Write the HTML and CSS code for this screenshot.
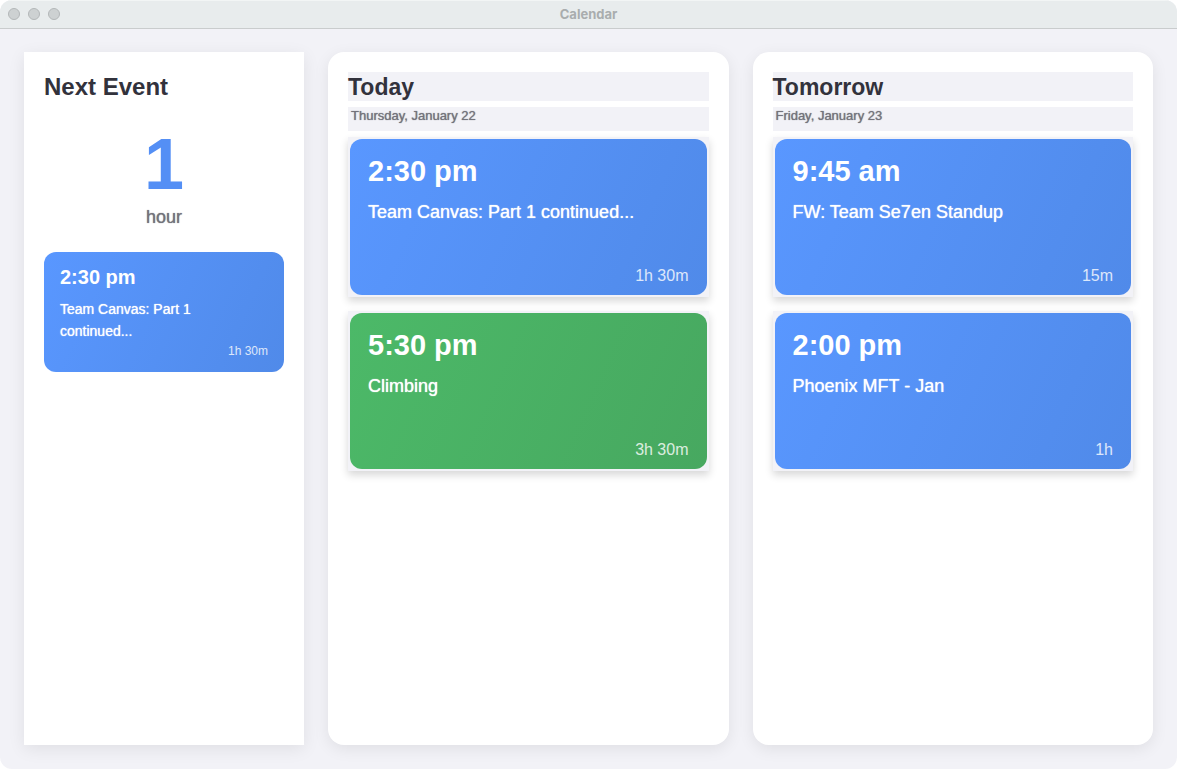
FILE: index.html
```html
<!DOCTYPE html>
<html lang="en">
<head>
  <meta charset="UTF-8">
  <meta name="viewport" content="width=device-width, initial-scale=1.0">
  <title>Calendar</title>
  <link rel="stylesheet" href="styles.css">
</head>
<body>

  <div class="window">
    <header class="titlebar">
      <div class="window-buttons">
        <button type="button" class="window-button" aria-label="Close"></button>
        <button type="button" class="window-button" aria-label="Minimize"></button>
        <button type="button" class="window-button" aria-label="Zoom"></button>
      </div>
      <div class="window-title">Calendar</div>
    </header>

    <main class="board">
      <aside class="next-event">
        <h2 class="next-title">Next Event</h2>
        <div class="countdown">
          <div class="countdown-number">1</div>
          <div class="countdown-unit">hour</div>
        </div>
        <div class="mini-card blue">
          <div class="mini-time">2:30 pm</div>
          <div class="mini-name">Team Canvas: Part 1 continued...</div>
          <div class="mini-duration">1h 30m</div>
        </div>
      </aside>

      <section class="day">
        <h2 class="day-title">Today</h2>
        <div class="day-date">Thursday, January 22</div>
        <div class="event-list">
          <div class="event">
            <div class="event-card blue">
              <div class="event-time">2:30 pm</div>
              <div class="event-name">Team Canvas: Part 1 continued...</div>
              <div class="event-duration">1h 30m</div>
            </div>
          </div>
          <div class="event">
            <div class="event-card green">
              <div class="event-time">5:30 pm</div>
              <div class="event-name">Climbing</div>
              <div class="event-duration">3h 30m</div>
            </div>
          </div>
        </div>
      </section>

      <section class="day">
        <h2 class="day-title">Tomorrow</h2>
        <div class="day-date">Friday, January 23</div>
        <div class="event-list">
          <div class="event">
            <div class="event-card blue">
              <div class="event-time">9:45 am</div>
              <div class="event-name">FW: Team Se7en Standup</div>
              <div class="event-duration">15m</div>
            </div>
          </div>
          <div class="event">
            <div class="event-card blue">
              <div class="event-time">2:00 pm</div>
              <div class="event-name">Phoenix MFT - Jan</div>
              <div class="event-duration">1h</div>
            </div>
          </div>
        </div>
      </section>
    </main>
  </div>

</body>
</html>
```
FILE: styles.css
```css
* {
  box-sizing: border-box;
}

body {
  margin: 0;
  background: #fff;
  font-family: "Liberation Sans", Arial, sans-serif;
  color: #32323c;
}

h2 {
  margin: 0;
}

.window {
  min-height: 100vh;
  display: flex;
  flex-direction: column;
  background: #f2f2f7;
  border-radius: 12px;
  overflow: hidden;
}

.titlebar {
  display: grid;
  grid-template-columns: 1fr auto 1fr;
  align-items: center;
  height: 29px;
  padding: 0 8px 2px;
  background: #e8eced;
  border-top: 1px solid #f2f5f5;
  border-bottom: 1px solid #c9cccd;
}

.window-buttons {
  display: flex;
  gap: 8px;
}

.window-button {
  width: 12px;
  height: 12px;
  padding: 0;
  border: 1px solid #b3b7b8;
  border-radius: 50%;
  background: #cdd1d2;
}

.window-title {
  font-family: Inter, sans-serif;
  font-size: 13px;
  line-height: 16px;
  font-weight: 700;
  color: #a9adae;
}

.board {
  flex: 1;
  display: grid;
  grid-template-columns: 280px 1fr 1fr;
  gap: 24px;
  padding: 23px 24px 24px;
}

.next-event,
.day {
  padding: 20px;
  background: #fff;
  box-shadow: 0 4px 16px rgba(0, 0, 0, 0.08);
}

.day {
  border-radius: 16px;
}

.next-title {
  font-size: 24px;
  line-height: 30px;
}

.countdown {
  padding: 26px 0 24px;
  text-align: center;
}

.countdown-number {
  font-size: 72px;
  font-weight: 700;
  line-height: 72px;
  color: #548ff5;
}

.countdown-unit {
  margin-top: 6px;
  font-size: 18px;
  line-height: 22px;
  color: #73737b;
}

/* a touch of weight between regular and bold */
.countdown-unit,
.day-date,
.mini-name,
.event-name {
  text-shadow: 0 0 1px currentColor;
}

.blue {
  background: linear-gradient(114deg, #5997ff, #508ae9);
}

.green {
  background: linear-gradient(114deg, #4cb968, #47a860);
}

.mini-card {
  min-height: 120px;
  padding: 12px 16px;
  border-radius: 12px;
  color: #fff;
}

.mini-time {
  font-size: 20px;
  font-weight: 700;
  line-height: 26px;
}

.mini-name {
  margin-top: 8px;
  padding-right: 16px;
  font-size: 14px;
  line-height: 22px;
}

.mini-duration {
  font-size: 12px;
  line-height: 18px;
  text-align: right;
  opacity: 0.8;
}

.day-title {
  padding-top: 2px;
  font-size: 23px;
  line-height: 27px;
  background: #f2f2f7;
}

.day-date {
  height: 24px;
  margin: 6px 0;
  padding: 0 3px;
  font-size: 13px;
  line-height: 18px;
  color: #73737b;
  background: #f2f2f7;
}

.event-list {
  display: flex;
  flex-direction: column;
  gap: 14px;
}

.event {
  padding: 2px;
  background: #f2f2f7;
  box-shadow: 0 4px 8px rgba(0, 0, 0, 0.16);
}

.event-card {
  display: flex;
  flex-direction: column;
  height: 156px;
  padding: 14px 18px 7px;
  border-radius: 12px;
  color: #fff;
}

.event-time {
  font-size: 29px;
  font-weight: 700;
  line-height: 36px;
}

.event-name {
  margin-top: 12px;
  font-size: 18px;
  line-height: 22px;
}

.event-duration {
  margin-top: auto;
  font-size: 16px;
  line-height: 24px;
  text-align: right;
  opacity: 0.8;
}
```
